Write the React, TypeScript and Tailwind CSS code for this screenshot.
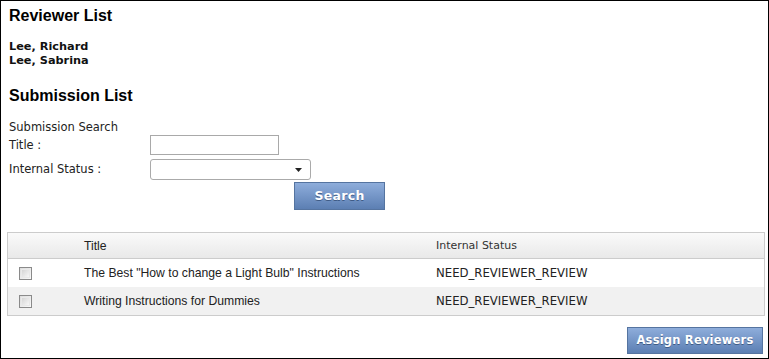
export default function App() {
  const reviewers = ['Lee, Richard', 'Lee, Sabrina'];
  const submissions = [
    { title: 'The Best "How to change a Light Bulb" Instructions', status: 'NEED_REVIEWER_REVIEW' },
    { title: 'Writing Instructions for Dummies', status: 'NEED_REVIEWER_REVIEW' },
  ];

  return (
    <div className="w-[769px] h-[359px] border border-black bg-white text-black overflow-hidden">
      {/* reviewers */}
      <div className="pl-2 pt-[6px]">
        <h2 className="font-['Liberation_Sans',Arial,sans-serif] font-bold text-[16px] leading-[18px]">Reviewer List</h2>
        <div className="mt-[15px] font-['DejaVu_Sans',Verdana,sans-serif] font-bold text-[11.3px] leading-[14px] text-[#111]">
          {reviewers.map(r => (
            <div key={r}>{r}</div>
          ))}
        </div>
        <h2 className="mt-[19px] font-['Liberation_Sans',Arial,sans-serif] font-bold text-[16px] leading-[18px]">Submission List</h2>
      </div>

      {/* search form */}
      <div className="pl-2 mt-[15px] font-['DejaVu_Sans',Verdana,sans-serif] text-[11.5px] text-[#222]">
        <div className="leading-[14px]">Submission Search</div>
        <div className="flex items-center mt-[1px] h-[20px]">
          <span className="w-[141px] pt-[1px]">Title :</span>
          <input type="text" className="w-[129px] h-[20px] border border-[#a9a9a9] bg-white outline-none" />
        </div>
        <div className="flex items-center mt-[4px] h-[21px]">
          <span className="w-[141px]">Internal Status :</span>
          <div className="w-[161px] h-[21px] border border-[#aaa] rounded-[3px] bg-white flex items-center justify-end pr-[8px]">
            <svg width="7" height="4" viewBox="0 0 7 4"><path d="M0 0h7L3.5 4z" fill="#222" /></svg>
          </div>
        </div>
        <button className="ml-[285px] mt-[2px] w-[91px] h-[28px] border border-[#5574a0] bg-gradient-to-b from-[#8eaddb] to-[#5c7fb3] text-white font-bold text-[12.5px] tracking-[0.3px] [text-shadow:0_1px_0_#3e5b86]">
          Search
        </button>
      </div>

      {/* table */}
      <div className="ml-[6px] mr-[3px] mt-[22px] border border-[#ccc] font-['Liberation_Sans',Arial,sans-serif] text-[12.2px] text-[#222]">
        <div className="flex items-center h-[26px] pt-[2px] bg-gradient-to-b from-[#fafafa] to-[#e9e9e9] border-b border-[#ccc]">
          <span className="w-[76px]" />
          <span className="w-[352px]">Title</span>
          <span className="font-['DejaVu_Sans',Verdana,sans-serif] text-[11px] text-[#333]">Internal Status</span>
        </div>
        {submissions.map((s, i) => (
          <div key={i} className={`flex items-center h-[28px] ${i % 2 === 1 ? 'bg-[#f1f1f1]' : 'bg-white'}`}>
            <span className="w-[76px] pl-[11px] flex items-center">
              <span className="w-[13px] h-[13px] border border-[#8a8a8a] bg-gradient-to-br from-[#dcdcdc] to-[#fafafa] p-[1px]">
                <span className="block w-full h-full border border-[#e9e9e9] bg-gradient-to-br from-[#d5d5d5] to-[#f7f7f7]" />
              </span>
            </span>
            <span className="w-[352px] pt-[1px]">{s.title}</span>
            <span className="pt-[1px] font-['DejaVu_Sans',Verdana,sans-serif] text-[11.7px]">{s.status}</span>
          </div>
        ))}
      </div>

      <div className="flex justify-end mr-[5px] mt-[11px]">
        <button className="w-[136px] h-[27px] border border-[#5574a0] bg-gradient-to-b from-[#8eaddb] to-[#5c7fb3] text-white font-['DejaVu_Sans',Verdana,sans-serif] font-bold text-[11.5px] tracking-[0.2px] [text-shadow:0_1px_0_#3e5b86]">
          Assign Reviewers
        </button>
      </div>
    </div>
  );
}
